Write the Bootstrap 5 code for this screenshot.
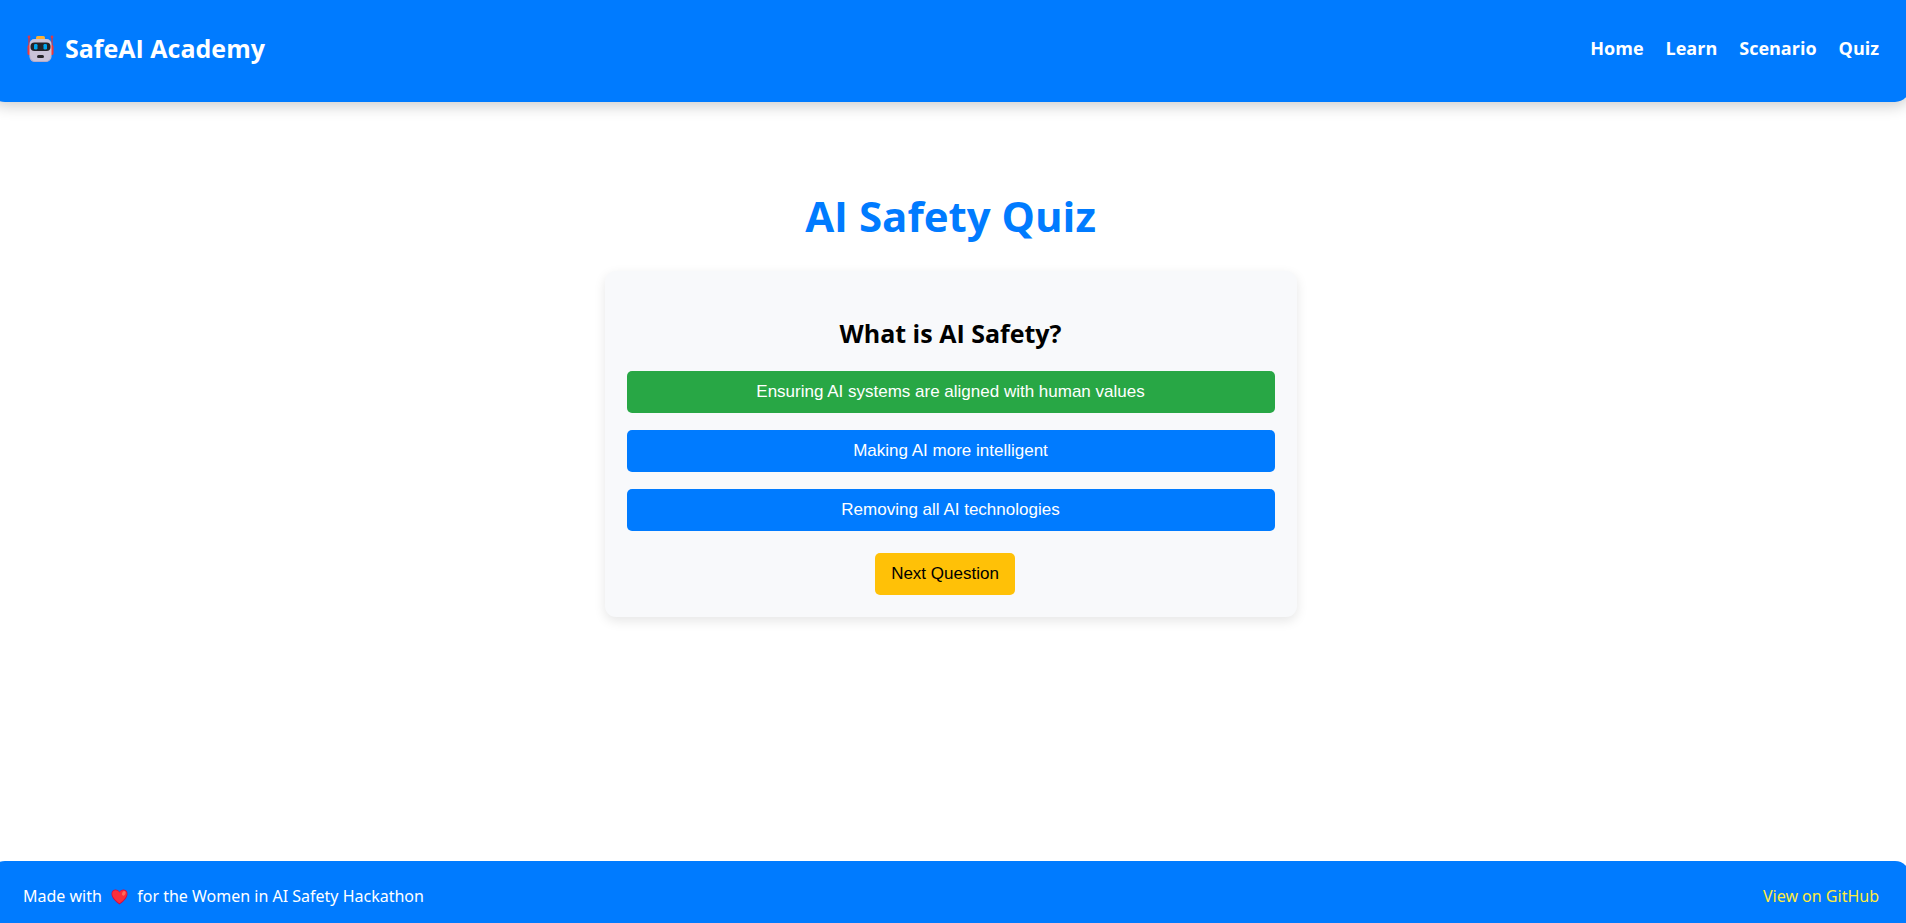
<!DOCTYPE html>
<html lang="en">
<head>
<meta charset="utf-8">
<meta name="viewport" content="width=device-width, initial-scale=1">
<title>AI Safety Quiz - SafeAI Academy</title>
<link rel="stylesheet" href="https://cdn.jsdelivr.net/npm/bootstrap@5.3.0/dist/css/bootstrap.min.css">
<style>
  body { font-family: "Open Sans", "Noto Sans", sans-serif; color: #000; overflow-x: hidden; }
  .site-bar { background: #007bff; color: #fff; margin: 0 -4px 0 -10px; }
  .site-top { padding: 28px 31px 34px 37px; border-radius: 0 0 15px 15px; box-shadow: 0 4px 15px rgba(0, 0, 0, .2); }
  .site-foot { padding: 23px 31px 15px 33px; border-radius: 15px 15px 0 0; font-family: "Noto Sans", "Open Sans", sans-serif; font-size: 16px; line-height: 24px; }
  .brand-name { font-size: 25px; font-weight: 700; line-height: 40px; gap: 11px; }
  .top-link { font-size: 18px; font-weight: 700; line-height: 24px; color: #fff; text-decoration: none; }
  .top-links { gap: 22px; }
  .repo-link { color: #ffeb3b; text-decoration: none; }
  .quiz-page { padding-right: 5px; }
  .page-title { font-size: 42px; font-weight: 700; line-height: 60px; color: #007bff; margin: 84px 0 25px; }
  .quiz-box { width: 692px; max-width: 100%; padding: 44px 22px 22px; background: #f8f9fb; border-radius: 11px; box-shadow: 0 4px 12px rgba(0, 0, 0, .1); }
  .question { font-size: 25px; font-weight: 700; line-height: 36px; margin: 0 0 20px; }
  .answers { gap: 17px; margin-bottom: 22px; }
  .quiz-btn { font-family: Arial, "Liberation Sans", sans-serif; font-size: 17px; line-height: 20px; padding: 11px 16px; border: 0; border-radius: 5px; }
  .answer { background: #007bff; color: #fff; }
  .answer.is-right { background: #28a745; }
  .next { background: #ffc107; color: #000; margin-right: 11px; }
  .heart { margin: 0 5px; vertical-align: -3px; }
</style>
</head>
<body class="d-flex flex-column min-vh-100 bg-white">
<header class="site-bar site-top d-flex justify-content-between align-items-center">
  <div class="brand-name d-flex align-items-center">
    <svg width="27" height="27" viewBox="0 0 27 27" aria-hidden="true">
      <path d="M2 2v10M25 2v10" stroke="#c83c50" stroke-width="1.4"/>
      <circle cx="2" cy="2" r="1.4" fill="#d93a4c"/><circle cx="25" cy="2" r="1.4" fill="#d93a4c"/>
      <rect x="0.500" y="10" width="4" height="10" rx="1.5" fill="#f03a3a"/><rect x="22.500" y="10" width="4" height="10" rx="1.5" fill="#f03a3a"/>
      <rect x="9" y="1" width="9" height="5" rx="1.6" fill="#fcb033"/>
      <rect x="2.500" y="4" width="22" height="22.500" rx="5" fill="#cac3d8"/>
      <path d="M3 20q1 6 5 6h11q4 0 5-6v2q-1 5-5 5H8q-5 0-5-5z" fill="#b7abc8"/>
      <rect x="3.500" y="7.500" width="20" height="8.500" rx="4" fill="#242329"/>
      <rect x="7" y="9" width="3.500" height="5.500" rx="1.200" fill="#00a6ed"/><rect x="16.500" y="9" width="3.500" height="5.500" rx="1.200" fill="#00a6ed"/>
      <rect x="10" y="20" width="7" height="3" rx="1.500" fill="#242329"/>
    </svg>
    <span>SafeAI Academy</span>
  </div>
  <nav class="top-links d-flex">
    <a class="top-link" href="#">Home</a>
    <a class="top-link" href="#">Learn</a>
    <a class="top-link" href="#">Scenario</a>
    <a class="top-link" href="#">Quiz</a>
  </nav>
</header>
<main class="quiz-page flex-grow-1 d-flex flex-column align-items-center text-center">
  <h1 class="page-title">AI Safety Quiz</h1>
  <section class="quiz-box">
    <h2 class="question">What is AI Safety?</h2>
    <div class="answers d-grid">
      <button type="button" class="btn quiz-btn answer is-right">Ensuring AI systems are aligned with human values</button>
      <button type="button" class="btn quiz-btn answer">Making AI more intelligent</button>
      <button type="button" class="btn quiz-btn answer">Removing all AI technologies</button>
    </div>
    <button type="button" class="btn quiz-btn next">Next Question</button>
  </section>
</main>
<footer class="site-bar site-foot d-flex justify-content-between align-items-center">
  <div>Made with
    <svg class="heart" width="17" height="16" viewBox="0 0 17 16" role="img" aria-label="love"><path d="M8.500 3C7.300.900 5.600.300 4.100.500 1.700.800.300 2.800.500 5.300c.300 4.200 4.500 7.900 8 10.200 3.500-2.300 7.700-6 8-10.200.200-2.500-1.200-4.500-3.600-4.800-1.500-.200-3.200.400-4.400 2.500z" fill="#ca0b4a"/><path d="M8.500 3.600C7.400 1.700 5.700 1 4.300 1.200 2 1.500 1 3.200 1.200 5.200c.400 3.600 4.200 6.800 7.300 9 3.100-2.200 6.900-5.400 7.300-9 .200-2-.800-3.700-3.100-4-1.400-.200-3.100.500-4.200 2.400z" fill="#f92f3c"/><ellipse cx="12.800" cy="4.400" rx="1.700" ry="2.400" transform="rotate(25 12.800 4.400)" fill="#ff6a5a"/></svg>
    for the Women in AI Safety Hackathon</div>
  <a class="repo-link" href="#">View on GitHub</a>
</footer>
<script src="https://cdn.jsdelivr.net/npm/bootstrap@5.3.0/dist/js/bootstrap.bundle.min.js"></script>
</body>
</html>
